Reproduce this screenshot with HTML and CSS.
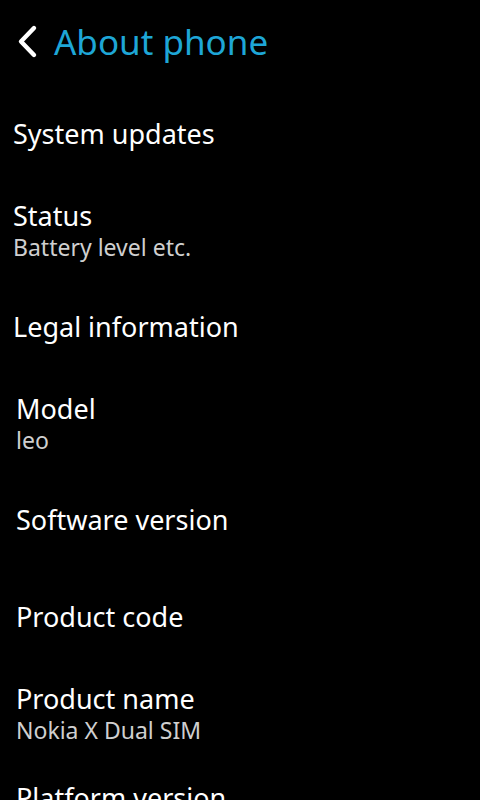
FILE: index.html
```html
<!DOCTYPE html>
<html lang="en">
<head>
    <meta charset="UTF-8">
    <meta name="viewport" content="width=device-width, initial-scale=1.0">
    <title>About phone</title>
    <link rel="stylesheet" href="styles.css">
</head>
<body>

    <div class="header">
        <svg class="back" width="26" height="36" viewBox="0 0 26 36">
            <path d="M21 4 L8 17.5 L21 31" fill="none" stroke="#fff" stroke-width="4.4" stroke-linecap="round" stroke-linejoin="round"/>
        </svg>
        <h1>About phone</h1>
    </div>

    <div class="list">
        <div class="item first">
            <p class="label">System updates</p>
        </div>
        <div class="item first two">
            <p class="label">Status</p>
            <p class="sub">Battery level etc.</p>
        </div>
        <div class="item first">
            <p class="label">Legal information</p>
        </div>
        <div class="item two">
            <p class="label">Model</p>
            <p class="sub">leo</p>
        </div>
        <div class="item soft">
            <p class="label">Software version</p>
        </div>
        <div class="item">
            <p class="label">Product code</p>
        </div>
        <div class="item two last-two">
            <p class="label">Product name</p>
            <p class="sub">Nokia X Dual SIM</p>
        </div>
        <div class="item">
            <p class="label">Platform version</p>
        </div>
    </div>

</body>
</html>
```

FILE: styles.css
```css
body {
    margin: 0;
    background-color: #000;
    color: #fff;
    font-family: "Noto Sans", sans-serif;
    height: 800px;
    overflow: hidden;
}

p {
    margin: 0;
}

.header {
    display: flex;
    align-items: center;
    height: 86px;
    padding-left: 13px;
}

.back {
    margin-right: 15px;
    margin-top: -2px;
}

h1 {
    margin: -3px 0 0;
    font-size: 35px;
    font-weight: normal;
    color: #1ea6d6;
}

.list {
    padding-top: 31px;
    padding-left: 16px;
}

.item {
    height: 82px;
}

.item.two {
    height: 111px;
}

.item.soft {
    height: 97px;
}

.item.last-two {
    height: 99px;
}

.item.first {
    margin-left: -3px;
}

.label {
    font-size: 27px;
    line-height: 34px;
}

.sub {
    font-size: 23px;
    line-height: 29px;
    color: #cfcfcf;
}
```
